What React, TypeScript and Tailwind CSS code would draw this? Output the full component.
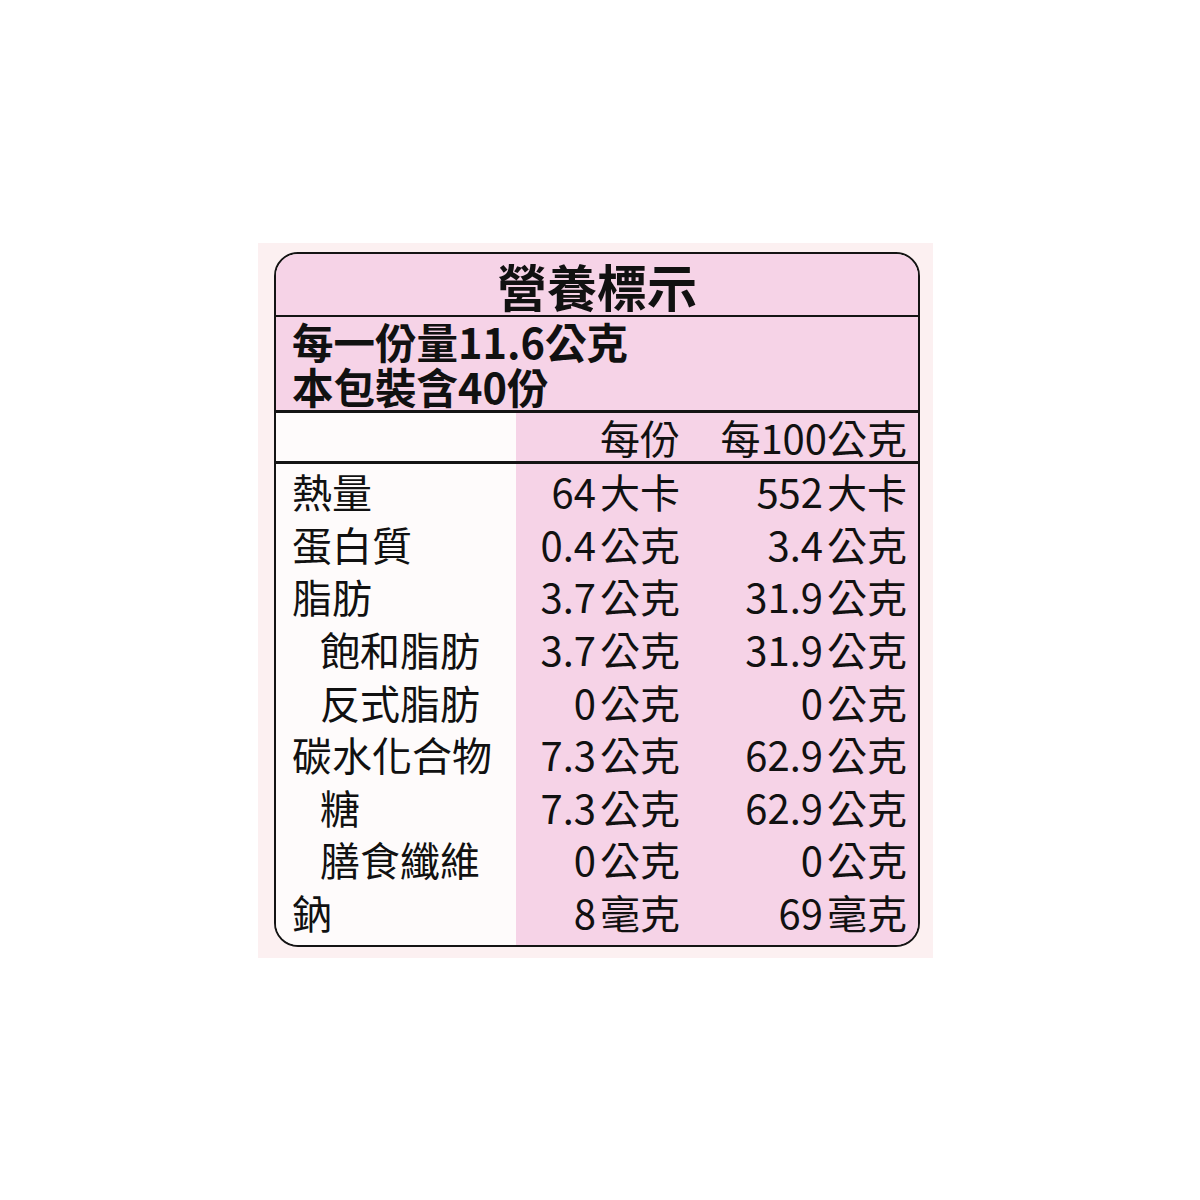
import React from "react";

const PINK = "bg-[#f6d3e7]";

const rows = [
  { label: "熱量", indent: false, per: ["64", "大卡"], per100: ["552", "大卡"] },
  { label: "蛋白質", indent: false, per: ["0.4", "公克"], per100: ["3.4", "公克"] },
  { label: "脂肪", indent: false, per: ["3.7", "公克"], per100: ["31.9", "公克"] },
  { label: "飽和脂肪", indent: true, per: ["3.7", "公克"], per100: ["31.9", "公克"] },
  { label: "反式脂肪", indent: true, per: ["0", "公克"], per100: ["0", "公克"] },
  { label: "碳水化合物", indent: false, per: ["7.3", "公克"], per100: ["62.9", "公克"] },
  { label: "糖", indent: true, per: ["7.3", "公克"], per100: ["62.9", "公克"] },
  { label: "膳食纖維", indent: true, per: ["0", "公克"], per100: ["0", "公克"] },
  { label: "鈉", indent: false, per: ["8", "毫克"], per100: ["69", "毫克"] },
];

function Amount({ v }: { v: string[] }) {
  return (
    <>
      <span className="mr-[4px]">{v[0]}</span>
      <span>{v[1]}</span>
    </>
  );
}

export default function App() {
  return (
    <div
      className="w-[1200px] h-[1200px] bg-white pt-[243px] pl-[258px] text-[#111]"
      style={{ fontFamily: '"Noto Sans CJK TC", "Noto Sans", sans-serif' }}
    >
      <div className="w-[675px] h-[715px] bg-[#fcf0f1] pl-[16px] pt-[9px]">
        <div className="w-[646px] h-[695px] border-2 border-[#141414] rounded-[24px] overflow-hidden flex flex-col">
          {/* title */}
          <div className={`${PINK} h-[63px] flex items-center justify-center border-b-2 border-[#141414]`}>
            <span className="text-[50px] font-bold leading-[58px]">營養標示</span>
          </div>

          {/* serving */}
          <div className={`${PINK} h-[96px] pl-[16px] pt-[2px] border-b-[3px] border-[#141414]`}>
            <p className="text-[41.5px] font-bold leading-[45px]">每一份量11.6公克</p>
            <p className="text-[41.5px] font-bold leading-[45px]">本包裝含40份</p>
          </div>

          {/* column header */}
          <div className="grid grid-cols-[240px_174px_1fr] h-[51px] border-b-[3px] border-[#141414] text-[40px] leading-none">
            <div className="bg-[#fefbfb]" />
            <div className={`${PINK} flex items-center justify-end pr-[10px]`}>每份</div>
            <div className={`${PINK} flex items-center justify-end pr-[11px]`}>每100公克</div>
          </div>

          {/* rows */}
          <div className="flex-1 grid grid-cols-[240px_174px_1fr] text-[40px] leading-none">
            <div className="bg-[#fefbfb] pt-[1px]">
              {rows.map((r) => (
                <div
                  key={r.label}
                  className={`h-[52.6px] flex items-center ${r.indent ? "pl-[44px]" : "pl-[16px]"}`}
                >
                  {r.label}
                </div>
              ))}
            </div>
            <div className={`${PINK} pt-[1px]`}>
              {rows.map((r) => (
                <div key={r.label} className="h-[52.6px] flex items-center justify-end pr-[10px]">
                  <Amount v={r.per} />
                </div>
              ))}
            </div>
            <div className={`${PINK} pt-[1px]`}>
              {rows.map((r) => (
                <div key={r.label} className="h-[52.6px] flex items-center justify-end pr-[11px]">
                  <Amount v={r.per100} />
                </div>
              ))}
            </div>
          </div>
        </div>
      </div>
    </div>
  );
}
